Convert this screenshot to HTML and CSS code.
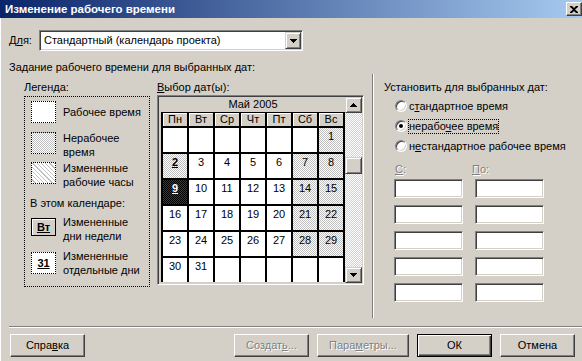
FILE: index.html
```html
<!DOCTYPE html>
<html lang="ru">
<head>
    <meta charset="UTF-8">
    <title>Изменение рабочего времени</title>
    <link rel="stylesheet" href="styles.css">
</head>
<body>
<div class="dialog">

    <!-- Title bar -->
    <div class="titlebar">
        <span class="title">Изменение рабочего времени</span>
        <span class="close-btn">
            <svg width="8" height="7" viewBox="0 0 8 7"><path d="M0 0h2l2 2 2-2h2v1L5 3.5 8 6v1H6L4 5 2 7H0V6l3-2.5L0 1z" fill="#000"/></svg>
        </span>
    </div>

    <!-- Calendar selector -->
    <div class="for-row">
        <span class="for-label">Д<u>л</u>я:</span>
        <div class="combo">
            <span>Стандартный (календарь проекта)</span>
            <span class="combo-btn">
                <svg width="7" height="4" viewBox="0 0 7 4"><path d="M0 0h7v1h-1v1h-1v1h-1v1h-1v-1h-1v-1h-1v-1h-1z" fill="#000"/></svg>
            </span>
        </div>
    </div>

    <div class="section-title">Задание рабочего времени для выбранных дат:</div>

    <div class="main">
        <div class="left">

            <!-- Legend -->
            <div class="legend-col">
                <div class="caption">Легенда:</div>
                <div class="legend-box">
                    <div class="legend-item li-work">
                        <span class="swatch sw-work"></span>
                        <span class="legend-text">Рабочее время</span>
                    </div>
                    <div class="legend-item li-off">
                        <span class="swatch sw-off"></span>
                        <span class="legend-text">Нерабочее<br>время</span>
                    </div>
                    <div class="legend-item li-hours">
                        <span class="swatch sw-hours"></span>
                        <span class="legend-text">Измененные<br>рабочие часы</span>
                    </div>
                    <div class="in-cal">В этом календаре:</div>
                    <div class="legend-item li-wd">
                        <span class="swatch sw-wd"><b>Вт</b></span>
                        <span class="legend-text">Измененные<br>дни недели</span>
                    </div>
                    <div class="legend-item li-day">
                        <span class="swatch sw-day"><b>31</b></span>
                        <span class="legend-text">Измененные<br>отдельные дни</span>
                    </div>
                </div>
            </div>

            <!-- Calendar -->
            <div class="cal-col">
                <div class="caption"><u>В</u>ыбор дат(ы):</div>
                <div class="calendar">
                    <div class="cal-main">
                        <div class="cal-month">Май 2005</div>
                        <div class="cal-grid">
                            <div class="cal-head">Пн</div>
                            <div class="cal-head">Вт</div>
                            <div class="cal-head">Ср</div>
                            <div class="cal-head">Чт</div>
                            <div class="cal-head">Пт</div>
                            <div class="cal-head">Сб</div>
                            <div class="cal-head">Вс</div>

                            <div class="day"></div>
                            <div class="day"></div>
                            <div class="day"></div>
                            <div class="day"></div>
                            <div class="day"></div>
                            <div class="day"></div>
                            <div class="day off">1</div>

                            <div class="day off"><b>2</b></div>
                            <div class="day">3</div>
                            <div class="day">4</div>
                            <div class="day">5</div>
                            <div class="day">6</div>
                            <div class="day off">7</div>
                            <div class="day off">8</div>

                            <div class="day sel"><b>9</b></div>
                            <div class="day">10</div>
                            <div class="day">11</div>
                            <div class="day">12</div>
                            <div class="day">13</div>
                            <div class="day off">14</div>
                            <div class="day off">15</div>

                            <div class="day">16</div>
                            <div class="day">17</div>
                            <div class="day">18</div>
                            <div class="day">19</div>
                            <div class="day">20</div>
                            <div class="day off">21</div>
                            <div class="day off">22</div>

                            <div class="day">23</div>
                            <div class="day">24</div>
                            <div class="day">25</div>
                            <div class="day">26</div>
                            <div class="day">27</div>
                            <div class="day off">28</div>
                            <div class="day off">29</div>

                            <div class="day">30</div>
                            <div class="day">31</div>
                            <div class="day"></div>
                            <div class="day"></div>
                            <div class="day"></div>
                            <div class="day"></div>
                            <div class="day"></div>
                        </div>
                    </div>
                    <div class="scrollbar">
                        <span class="sb-btn">
                            <svg width="7" height="4" viewBox="0 0 7 4"><path d="M3 0h1v1h1v1h1v1h1v1h-7v-1h1v-1h1v-1h1z" fill="#000"/></svg>
                        </span>
                        <span class="sb-thumb"></span>
                        <span class="sb-btn sb-down">
                            <svg width="7" height="4" viewBox="0 0 7 4"><path d="M0 0h7v1h-1v1h-1v1h-1v1h-1v-1h-1v-1h-1v-1h-1z" fill="#000"/></svg>
                        </span>
                    </div>
                </div>
            </div>
        </div>

        <!-- Options for selected dates -->
        <div class="right">
            <div class="caption">Установить для выбранных дат:</div>
            <div class="radio-row">
                <span class="radio"></span>
                <span class="radio-label">с<u>т</u>андартное время</span>
            </div>
            <div class="radio-row">
                <span class="radio checked"></span>
                <span class="radio-label focus">нерабо<u>ч</u>ее время</span>
            </div>
            <div class="radio-row">
                <span class="radio"></span>
                <span class="radio-label">н<u>е</u>стандартное рабочее время</span>
            </div>

            <div class="time-labels">
                <span class="disabled"><u>С</u>:</span>
                <span class="disabled to-label"><u>П</u>о:</span>
            </div>
            <div class="time-grid">
                <span class="field"></span><span class="field"></span>
                <span class="field"></span><span class="field"></span>
                <span class="field"></span><span class="field"></span>
                <span class="field"></span><span class="field"></span>
                <span class="field"></span><span class="field"></span>
            </div>
        </div>
    </div>

    <div class="rule"></div>

    <div class="buttons">
        <span class="btn">Спра<u>в</u>ка</span>
        <span class="btn disabled push-right">Создат<u>ь</u>...</span>
        <span class="btn btn-wide disabled">Пара<u>м</u>етры...</span>
        <span class="btn btn-default">ОК</span>
        <span class="btn">Отмена</span>
    </div>

</div>
</body>
</html>
```

FILE: styles.css
```css
/* General */
* {
    box-sizing: border-box;
}

body {
    margin: 0;
    background: #d4d0c8;
    font-family: "Liberation Sans", Arial, sans-serif;
    font-size: 11px;
    line-height: 13px;
    color: #000;
}

.dialog {
    width: 582px;
    height: 361px;
    overflow: hidden;
    box-shadow: inset 1px 0 #fff;
}

/* Title bar */
.titlebar {
    height: 18px;
    display: flex;
    align-items: center;
    justify-content: space-between;
    padding-left: 5px;
    background: linear-gradient(90deg, #0a246a, #a6caf0);
}

.title {
    color: #fff;
    font-weight: bold;
    font-size: 11.5px;
}

.close-btn {
    width: 16px;
    height: 14px;
    display: flex;
    align-items: center;
    justify-content: center;
    background: #d4d0c8;
    border: 1px solid;
    border-color: #fff #404040 #404040 #fff;
    box-shadow: inset -1px -1px #808080;
}

/* Shared 3D looks */
.combo,
.field {
    background: #fff;
    border: 1px solid;
    border-color: #808080 #fff #fff #808080;
    box-shadow: inset 1px 1px #404040, inset -1px -1px #d4d0c8;
}

.combo-btn,
.sb-btn,
.sb-thumb {
    display: flex;
    align-items: center;
    justify-content: center;
    background: #d4d0c8;
    border: 1px solid;
    border-color: #d4d0c8 #404040 #404040 #d4d0c8;
    box-shadow: inset 1px 1px #fff, inset -1px -1px #808080;
}

.disabled {
    color: #808080;
    text-shadow: 1px 1px #fff;
}

/* "Для" row */
.for-row {
    display: flex;
    align-items: center;
    height: 21px;
    margin-top: 12px;
    padding-left: 9px;
}

.for-label {
    width: 30px;
}

.combo {
    width: 264px;
    height: 21px;
    display: flex;
    align-items: center;
    justify-content: space-between;
    padding: 1px 1px 1px 4px;
}

.combo-btn {
    width: 16px;
    height: 17px;
}

.section-title {
    margin-top: 10px;
    padding-left: 9px;
}

/* Main area */
.main {
    display: flex;
    height: 244px;
}

.left {
    display: flex;
    gap: 7px;
    padding: 7px 0 0 24px;
}

.caption {
    height: 13px;
}

/* Legend */
.legend-col {
    width: 126px;
}

.legend-col .caption {
    margin-bottom: 2px;
}

.legend-box {
    height: 191px;
    border: 1px dotted #000;
    padding: 4px 0 0 6px;
}

.legend-item {
    display: flex;
    align-items: flex-start;
    gap: 7px;
    line-height: 14px;
}

.swatch {
    flex: none;
    width: 25px;
    height: 22px;
    margin-top: 1px;
    border: 1px dotted #000;
    display: flex;
    align-items: center;
    justify-content: center;
}

.swatch b {
    text-decoration: underline;
}

.li-work {
    align-items: center;
}

.li-work .swatch {
    margin-top: 0;
}

.li-off {
    margin-top: 8px;
}

.li-hours {
    margin-top: 2px;
}

.in-cal {
    margin: 7px 0 0 -1px;
    line-height: 14px;
}

.li-wd {
    margin-top: 5px;
}

.li-day {
    margin-top: 6px;
}

.li-wd .swatch,
.li-day .swatch {
    margin-top: 3px;
}

.sw-work {
    background: #fff;
}

.sw-off {
    background: repeating-conic-gradient(#c0c0c0 0 25%, #fff 0 50%) 0 0 / 2px 2px;
}

.sw-hours {
    background: repeating-linear-gradient(45deg, #fff 0 2px, #c0c0c0 2px 3px);
}

.sw-wd {
    height: 18px;
    border: 1px solid #000;
    box-shadow: inset 1px 1px #fff;
}

.sw-day {
    background: #fff;
}

/* Calendar */
.cal-col {
    width: 207px;
}

.cal-col .caption {
    margin-bottom: 1px;
}

.calendar {
    height: 190px;
    display: flex;
    padding: 1px 1px 1px 3px;
    border: 1px solid;
    border-color: #808080 #fff #fff #808080;
    box-shadow: inset 1px 1px #404040, inset -1px -1px #d4d0c8;
}

.cal-main {
    width: 184px;
}

.cal-month {
    height: 15px;
    line-height: 15px;
    text-align: center;
}

.cal-grid {
    display: grid;
    grid-template-columns: repeat(7, 24px);
    grid-template-rows: 13px repeat(6, 24px);
    gap: 2px;
    padding: 1px 2px 0;
    background: #000;
}

.cal-head {
    background: #d4d0c8;
    text-align: center;
    box-shadow: inset 1px 1px #fff;
}

.day {
    background: #fff;
    text-align: center;
    padding-top: 2px;
}

.day b {
    text-decoration: underline;
}

.day.off {
    background: repeating-conic-gradient(#c0c0c0 0 25%, #fff 0 50%) 0 0 / 2px 2px;
}

.day.sel {
    background: repeating-conic-gradient(#000 0 25%, #3a3a3a 0 50%) 0 0 / 2px 2px;
    color: #fff;
}

.scrollbar {
    width: 17px;
    display: flex;
    flex-direction: column;
    background: repeating-conic-gradient(#d4d0c8 0 25%, #fff 0 50%) 0 0 / 2px 2px;
}

.sb-btn {
    height: 16px;
}

.sb-thumb {
    height: 17px;
    margin-top: 44px;
}

.sb-down {
    margin-top: auto;
}

/* Right group */
.right {
    flex: 1;
    margin-left: 8px;
    padding: 7px 0 0 22px;
    border-left: 1px solid #808080;
    box-shadow: inset 1px 0 #fff;
}

.right .caption {
    margin: 0 0 2px -11px;
}

.radio-row {
    height: 20px;
    display: flex;
    align-items: center;
    gap: 1px;
}

.radio {
    width: 12px;
    height: 12px;
    border-radius: 50%;
    background: #fff;
    border: 1px solid;
    border-color: #808080 #fff #fff #808080;
    box-shadow: inset 1px 1px #404040, inset -1px -1px #d4d0c8;
    display: flex;
    align-items: center;
    justify-content: center;
}

.radio.checked::after {
    content: "";
    width: 4px;
    height: 4px;
    border-radius: 50%;
    background: #000;
}

.radio-label {
    border: 1px solid transparent;
}

.radio-label.focus {
    border: 1px dotted #000;
}

.time-labels {
    display: grid;
    grid-template-columns: 80px 69px;
    height: 13px;
    margin-top: 7px;
}

.to-label {
    margin-left: -3px;
}

.time-grid {
    display: grid;
    grid-template-columns: 69px 69px;
    column-gap: 12px;
    row-gap: 7px;
    margin: 3px 0 0 -1px;
}

.field {
    height: 19px;
}

/* Bottom */
.rule {
    margin: 8px 0 0 9px;
    border-top: 1px solid #808080;
    border-bottom: 1px solid #fff;
}

.buttons {
    display: flex;
    gap: 8px;
    margin-top: 6px;
    padding: 0 7px 0 10px;
}

.btn {
    width: 75px;
    height: 23px;
    display: flex;
    align-items: center;
    justify-content: center;
    border: 1px solid;
    border-color: #fff #404040 #404040 #fff;
    box-shadow: inset -1px -1px #808080;
}

.btn-wide {
    width: 92px;
}

.push-right {
    margin-left: auto;
}

.btn-default {
    border: 1px solid #000;
    box-shadow: inset 1px 1px #fff, inset -1px -1px #404040, inset -2px -2px #808080;
}
```
